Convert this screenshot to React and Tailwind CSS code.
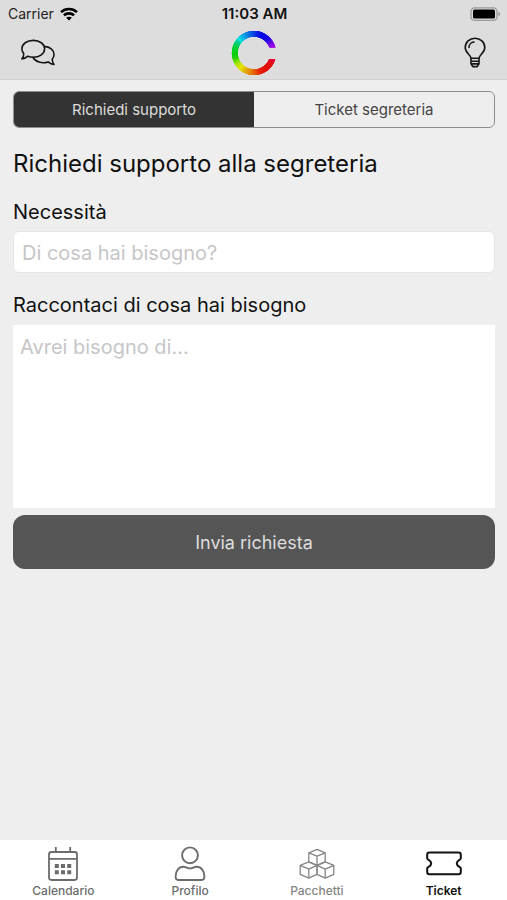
import { useState } from "react";

const hueStops = [
  [0, 292],
  [20, 278],
  [45, 245],
  [75, 236],
  [100, 214],
  [130, 188],
  [160, 135],
  [190, 115],
  [215, 70],
  [235, 52],
  [262, 30],
  [290, 5],
  [320, 0],
  [361, -28],
];

function hueAt(angle) {
  const i = hueStops.findIndex(([a]) => a > angle);
  const [a0, h0] = hueStops[i - 1];
  const [a1, h1] = hueStops[i];
  return h0 + ((h1 - h0) * (angle - a0)) / (a1 - a0);
}

function lightnessAt(angle) {
  return angle > 140 && angle < 200 ? 42 : 46;
}

function arcPath(from, to, r) {
  const point = (deg) => {
    const rad = (deg * Math.PI) / 180;
    return `${23 + r * Math.cos(rad)} ${23 - r * Math.sin(rad)}`;
  };
  return `M${point(from)}A${r} ${r} 0 0 0 ${point(to)}`;
}

function Logo() {
  const steps = Array.from({ length: 118 }, (_, i) => 4 + i * 3);
  return (
    <svg viewBox="0 0 46 46" className="h-[46px] w-[46px]" role="img" aria-label="Logo">
      <clipPath id="ring-gap">
        <path d="M0 0H46V17.5H34V29H46V46H0Z" />
      </clipPath>
      <g clipPath="url(#ring-gap)" fill="none" strokeWidth="5.8">
        {steps.map((deg) => (
          <path
            key={deg}
            d={arcPath(deg, Math.min(deg + 9, 359), 19.2)}
            stroke={`hsl(${hueAt(deg)} 94% ${lightnessAt(deg)}%)`}
          />
        ))}
      </g>
    </svg>
  );
}

function WifiIcon() {
  return (
    <svg viewBox="0 0 18 14" className="h-[14px] w-[18px]" fill="none" stroke="#000" strokeWidth="2.6">
      <path d="M1 5.1C5.6.9 12.4.9 17 5.1" />
      <path d="M3.9 8.3C6.8 5.7 11.2 5.7 14.1 8.3" />
      <path d="M9 13.6 6.1 10.7C7.7 9.3 10.3 9.3 11.9 10.7Z" fill="#000" stroke="none" />
    </svg>
  );
}

function BatteryIcon() {
  return (
    <svg viewBox="0 0 31 14" className="h-[14px] w-[31px]">
      <rect x="1" y="0.8" width="26" height="12.6" rx="3.6" fill="none" stroke="#9b9b9b" strokeWidth="1.3" />
      <rect x="3" y="2.6" width="22" height="9" rx="1.6" fill="#000" />
      <path d="M28.4 4.8C30.8 5.6 30.8 8.6 28.4 9.4Z" fill="#9b9b9b" />
    </svg>
  );
}

function ChatIcon() {
  return (
    <svg
      viewBox="0 0 34 28"
      className="h-[28px] w-[34px]"
      fill="none"
      stroke="#151515"
      strokeWidth="1.6"
      strokeLinejoin="round"
      strokeLinecap="round"
    >
      <path d="M12.3 1.4C18.6 1.4 23.6 4.9 23.6 9.8S18.6 18.2 12.3 18.2C10.2 18.2 8.5 17.9 6.9 17.2 5.2 18.8 3.1 19.8.9 19.9 2.1 18.5 2.9 16.6 2.7 14.5 1.5 13.2.9 11.6.9 9.8.9 4.9 6 1.4 12.3 1.4Z" />
      <path d="M23.3 7.4C29 7.7 33 11.1 33 15.5 33 17.2 32.4 18.8 31.3 20.1 31.1 22.2 31.8 24 33 25.4 30.7 25.3 28.7 24.3 27.1 22.9 20.9 25 14 22.6 12 18.4" />
    </svg>
  );
}

function BulbIcon() {
  return (
    <svg
      viewBox="0 0 22 31"
      className="h-[31px] w-[22px]"
      fill="none"
      stroke="#151515"
      strokeWidth="1.6"
      strokeLinejoin="round"
      strokeLinecap="round"
    >
      <path d="M7 21.3C6.7 17.7 1.2 15.6 1.2 10.7 1.2 5.3 5.6 1.2 11 1.2S20.8 5.3 20.8 10.7C20.8 15.6 15.3 17.7 15 21.3Z" />
      <path d="M5 10.5C5 7.6 7.2 5.2 10 5" />
      <path d="M7 21.3V26.8L8.8 29.6H13.2L15 26.8V21.3M7 24.2H15M7 26.9H15" />
    </svg>
  );
}

function CalendarIcon() {
  return (
    <svg viewBox="0 0 36 36" className="h-9 w-9" fill="none" stroke="currentColor" strokeWidth="1.8">
      <rect x="4" y="6" width="28" height="28" rx="2.4" />
      <path d="M4 12.8H32M10.8 1V6M25.2 1V6" />
      <g fill="currentColor" stroke="none">
        <path d="M9.8 18h4v4h-4zM16 18h4v4h-4zM22.2 18h4v4h-4zM9.8 24.2h4v4h-4zM16 24.2h4v4h-4zM22.2 24.2h4v4h-4z" />
      </g>
    </svg>
  );
}

function ProfileIcon() {
  return (
    <svg viewBox="0 0 36 36" className="h-9 w-9" fill="none" stroke="currentColor" strokeWidth="1.9">
      <circle cx="18" cy="9.3" r="7.9" />
      <path d="M11.6 20.8C14 20.8 15.4 22.4 18 22.4S22 20.8 24.4 20.8C29.4 20.8 32.4 25 32.4 30.4 32.4 33 31.2 34 29 34H7C4.8 34 3.6 33 3.6 30.4 3.6 25 6.6 20.8 11.6 20.8Z" />
    </svg>
  );
}

function BoxesIcon() {
  return (
    <svg viewBox="0 0 36 36" className="h-9 w-9" fill="none" stroke="currentColor" strokeWidth="1.3" strokeLinejoin="round">
      <path d="M18 3.4 26.2 6.8V15.8L18 19.4 9.8 15.8V6.8ZM9.8 6.8 18 10.2 26.2 6.8M18 10.2V19.4" />
      <path d="M9.8 15.8 18 19.4V28.4L9.8 32.2 1.2 28.4V19.4ZM1.2 19.4 9.8 23.2 18 19.4M9.8 23.2V32.2" />
      <path d="M26.2 15.8 34.8 19.4V28.4L26.2 32.2 18 28.4V19.4ZM18 19.4 26.2 23.2 34.8 19.4M26.2 23.2V32.2" />
    </svg>
  );
}

function TicketIcon() {
  return (
    <svg viewBox="0 0 36 36" className="h-9 w-9" fill="none" stroke="currentColor" strokeWidth="2" strokeLinejoin="round">
      <path d="M3.4 6.6H32.6C34 6.6 34.8 7.4 34.8 8.8V12.6C34.8 14 30.8 14.2 30.8 17.4S34.8 20.8 34.8 22.2V26C34.8 27.4 34 28.2 32.6 28.2H3.4C2 28.2 1.2 27.4 1.2 26V22.2C1.2 20.8 5.2 20.6 5.2 17.4S1.2 14 1.2 12.6V8.8C1.2 7.4 2 6.6 3.4 6.6Z" />
    </svg>
  );
}

const segments = ["Richiedi supporto", "Ticket segreteria"];

const tabs = [
  { icon: CalendarIcon, label: "Calendario", color: "text-[#6c6c6c]" },
  { icon: ProfileIcon, label: "Profilo", color: "text-[#6c6c6c]" },
  { icon: BoxesIcon, label: "Pacchetti", color: "text-[#858585]" },
  { icon: TicketIcon, label: "Ticket", color: "text-[#111]", active: true },
];

export default function App() {
  const [segment, setSegment] = useState(0);

  return (
    <div className="flex min-h-screen flex-col bg-[#eee] font-['Inter',sans-serif] text-[#111]">
      <header className="border-b border-[#d0d0d0] bg-[#ddd]">
        <div className="grid h-[26px] grid-cols-[1fr_auto_1fr] items-center pt-0.5 pr-1.5 pl-2">
          <div className="flex items-center gap-1.5 text-sm text-[#222]">
            Carrier
            <WifiIcon />
          </div>
          <div className="text-center text-[15px] font-semibold">11:03 AM</div>
          <div className="flex justify-end">
            <BatteryIcon />
          </div>
        </div>
        <div className="grid h-[53px] grid-cols-3 items-center px-[21px]">
          <button type="button" aria-label="Messaggi" className="justify-self-start">
            <ChatIcon />
          </button>
          <div className="justify-self-center">
            <Logo />
          </div>
          <button type="button" aria-label="Suggerimenti" className="justify-self-end">
            <BulbIcon />
          </button>
        </div>
      </header>

      <main className="flex-1 pt-[11px] pr-3 pl-[13px]">
        <div className="grid h-[37px] grid-cols-2 overflow-hidden rounded-md border border-[#8e8e8e]">
          {segments.map((label, index) => (
            <button
              key={label}
              type="button"
              onClick={() => setSegment(index)}
              className={`pt-0.5 text-[15px] ${
                segment === index ? "bg-[#333] text-[#ddd]" : "text-[#444]"
              }`}
            >
              {label}
            </button>
          ))}
        </div>

        <h1 className="mt-5 text-2xl leading-8">Richiedi supporto alla segreteria</h1>

        <form onSubmit={(e) => e.preventDefault()}>
          <label htmlFor="need" className="mt-5 block text-xl leading-6">
            Necessità
          </label>
          <input
            id="need"
            type="text"
            placeholder="Di cosa hai bisogno?"
            className="mt-[7px] block h-[42px] w-full rounded-md border border-[#e6e6e6] bg-white px-2 pt-0.5 text-xl placeholder:text-[#c6c6c8] focus:outline-none"
          />
          <label htmlFor="details" className="mt-5 block text-xl leading-6">
            Raccontaci di cosa hai bisogno
          </label>
          <textarea
            id="details"
            placeholder="Avrei bisogno di..."
            className="mt-2 block h-[183px] w-full resize-none bg-white px-[7px] py-2 text-xl placeholder:text-[#c6c6c8] focus:outline-none"
          />
          <button
            type="submit"
            className="mt-[7px] h-[54px] w-full rounded-xl bg-[#555] pt-0.5 text-lg text-[#ddd]"
          >
            Invia richiesta
          </button>
        </form>
      </main>

      <nav className="grid h-[60px] grid-cols-4 bg-white">
        {tabs.map((tab) => {
          const Icon = tab.icon;
          return (
            <a
              key={tab.label}
              href="#"
              aria-current={tab.active ? "page" : undefined}
              className={`flex flex-col items-center gap-px pt-1.5 ${tab.color}`}
            >
              <Icon />
              <span className={`text-xs leading-4 ${tab.active ? "font-semibold" : "font-medium"}`}>
                {tab.label}
              </span>
            </a>
          );
        })}
      </nav>
    </div>
  );
}
